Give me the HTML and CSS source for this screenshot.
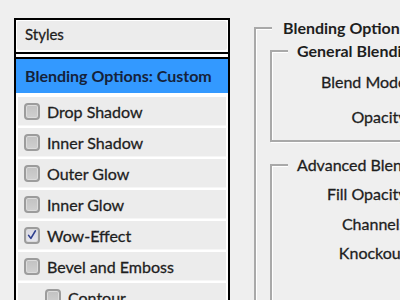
FILE: index.html
```html
<!DOCTYPE html>
<html>
<head>
<meta charset="utf-8">
<link rel="stylesheet" href="styles.css">
</head>
<body>
<div class="app">
  <div class="panel">
    <div class="styles-head">Styles</div>
    <div class="rule"></div>
    <div class="gap"></div>
    <div class="rule"></div>
    <div class="current">Blending Options: Custom</div>
    <ul class="effects">
      <li class="effect"><span class="cb"></span>Drop Shadow</li>
      <li class="effect"><span class="cb"></span>Inner Shadow</li>
      <li class="effect"><span class="cb"></span>Outer Glow</li>
      <li class="effect"><span class="cb"></span>Inner Glow</li>
      <li class="effect"><span class="cb checked"><svg viewBox="0 0 16 16" width="14" height="14"><path d="M3.5 8.5 L6.5 12.5 L12.5 2.5" fill="none" stroke="#2e3f8e" stroke-width="2.2" stroke-linecap="round" stroke-linejoin="round"/></svg></span>Wow-Effect</li>
      <li class="effect"><span class="cb"></span>Bevel and Emboss</li>
      <li class="effect sub"><span class="cb"></span>Contour</li>
    </ul>
  </div>
  <div class="options">
    <fieldset class="group outer">
      <legend class="legend bold top">Blending Options</legend>
      <fieldset class="group general">
        <legend class="legend bold inner">General Blending</legend>
        <div class="field tall"><span class="label">Blend Mode:</span></div>
        <div class="field tall"><span class="label">Opacity:</span></div>
      </fieldset>
      <fieldset class="group advanced">
        <legend class="legend inner regular">Advanced Blending</legend>
        <div class="field"><span class="label">Fill Opacity:</span></div>
        <div class="field"><span class="label">Channels:</span></div>
        <div class="field"><span class="label">Knockout:</span></div>
      </fieldset>
    </fieldset>
  </div>
</div>
</body>
</html>
```
FILE: styles.css
```css
html, body {
  margin: 0;
  padding: 0;
  width: 400px;
  height: 300px;
  overflow: hidden;
  background: #efefef;
  font-family: Lato, "Liberation Sans", sans-serif;
  color: #1e1e1e;
}
.app {
  display: flex;
  align-items: flex-start;
  padding: 18px 0 0 14px;
  width: 800px;
}
.panel {
  width: 212px;
  height: 400px;
  border: 2px solid #000;
  background: #fff;
  flex: none;
}
.styles-head {
  margin: 1px 1px 2px;
  height: 29px;
  line-height: 27px;
  background: #ececec;
  border-radius: 2px;
  padding-left: 8px;
  font-size: 15px;
  -webkit-text-stroke: 0.3px #1e1e1e;
}
.rule {
  height: 2px;
  background: #000;
}
.gap {
  height: 3px;
}
.current {
  background: #3399ff;
  height: 34px;
  line-height: 33px;
  padding-left: 9px;
  font-weight: bold;
  font-size: 16px;
  color: #15223a;
}
.effects {
  list-style: none;
  margin: 4px 2px 0;
  padding: 0;
  display: flex;
  flex-direction: column;
  gap: 2px;
}
.effect {
  height: 29px;
  background: #ececec;
  border-bottom: 1px solid #f6f6f6;
  box-sizing: border-box;
  display: flex;
  align-items: center;
  padding-left: 6px;
  font-size: 16px;
  -webkit-text-stroke: 0.3px #1e1e1e;
}
.effect.sub {
  padding-left: 27px;
}
.cb {
  width: 16px;
  height: 17px;
  box-sizing: border-box;
  border: 2px solid #9c9c9c;
  border-radius: 4px;
  background: linear-gradient(#c2c2c2, #d0d0d0);
  box-shadow: inset 0 0 0 1px #dcdcdc;
  margin-right: 7px;
  display: flex;
  align-items: center;
  justify-content: center;
  flex: none;
  -webkit-text-stroke: 0;
}
.cb.checked {
  background: linear-gradient(#d8d8e2, #e6e6ee);
}
.options {
  margin-left: 24px;
  margin-top: 1px;
  width: 400px;
  flex: none;
}
.group {
  margin: 0;
  padding: 0;
  min-width: 0;
  border: 2px solid #a9a9a9;
  border-right: none;
  box-shadow: inset 1px 1px 0 #fff, 1px 1px 0 #fff;
}
.outer {
  border-bottom: none;
  padding: 5px 0 0 14px;
  height: 400px;
}
.legend {
  margin-left: 16px;
  padding: 0 4px 0 11px;
  font-size: 16px;
  line-height: 18px;
  background: #efefef;
}
.legend.top {
  margin-left: 2px;
}
.legend.inner {
  padding-left: 9px;
}
.legend.regular {
  font-size: 16px;
  -webkit-text-stroke: 0.3px #1e1e1e;
}
.bold {
  font-weight: bold;
}
.general {
  padding: 4px 0 6px 0;
}
.advanced {
  margin-top: 14px;
  padding: 5px 0 0 0;
  height: 200px;
  border-bottom: none;
}
.field {
  height: 29.5px;
  line-height: 29.5px;
  font-size: 16px;
  -webkit-text-stroke: 0.3px #1e1e1e;
}
.field.tall {
  height: 35px;
  line-height: 35px;
}
.label {
  display: inline-block;
  width: 138.5px;
  text-align: right;
}
```
